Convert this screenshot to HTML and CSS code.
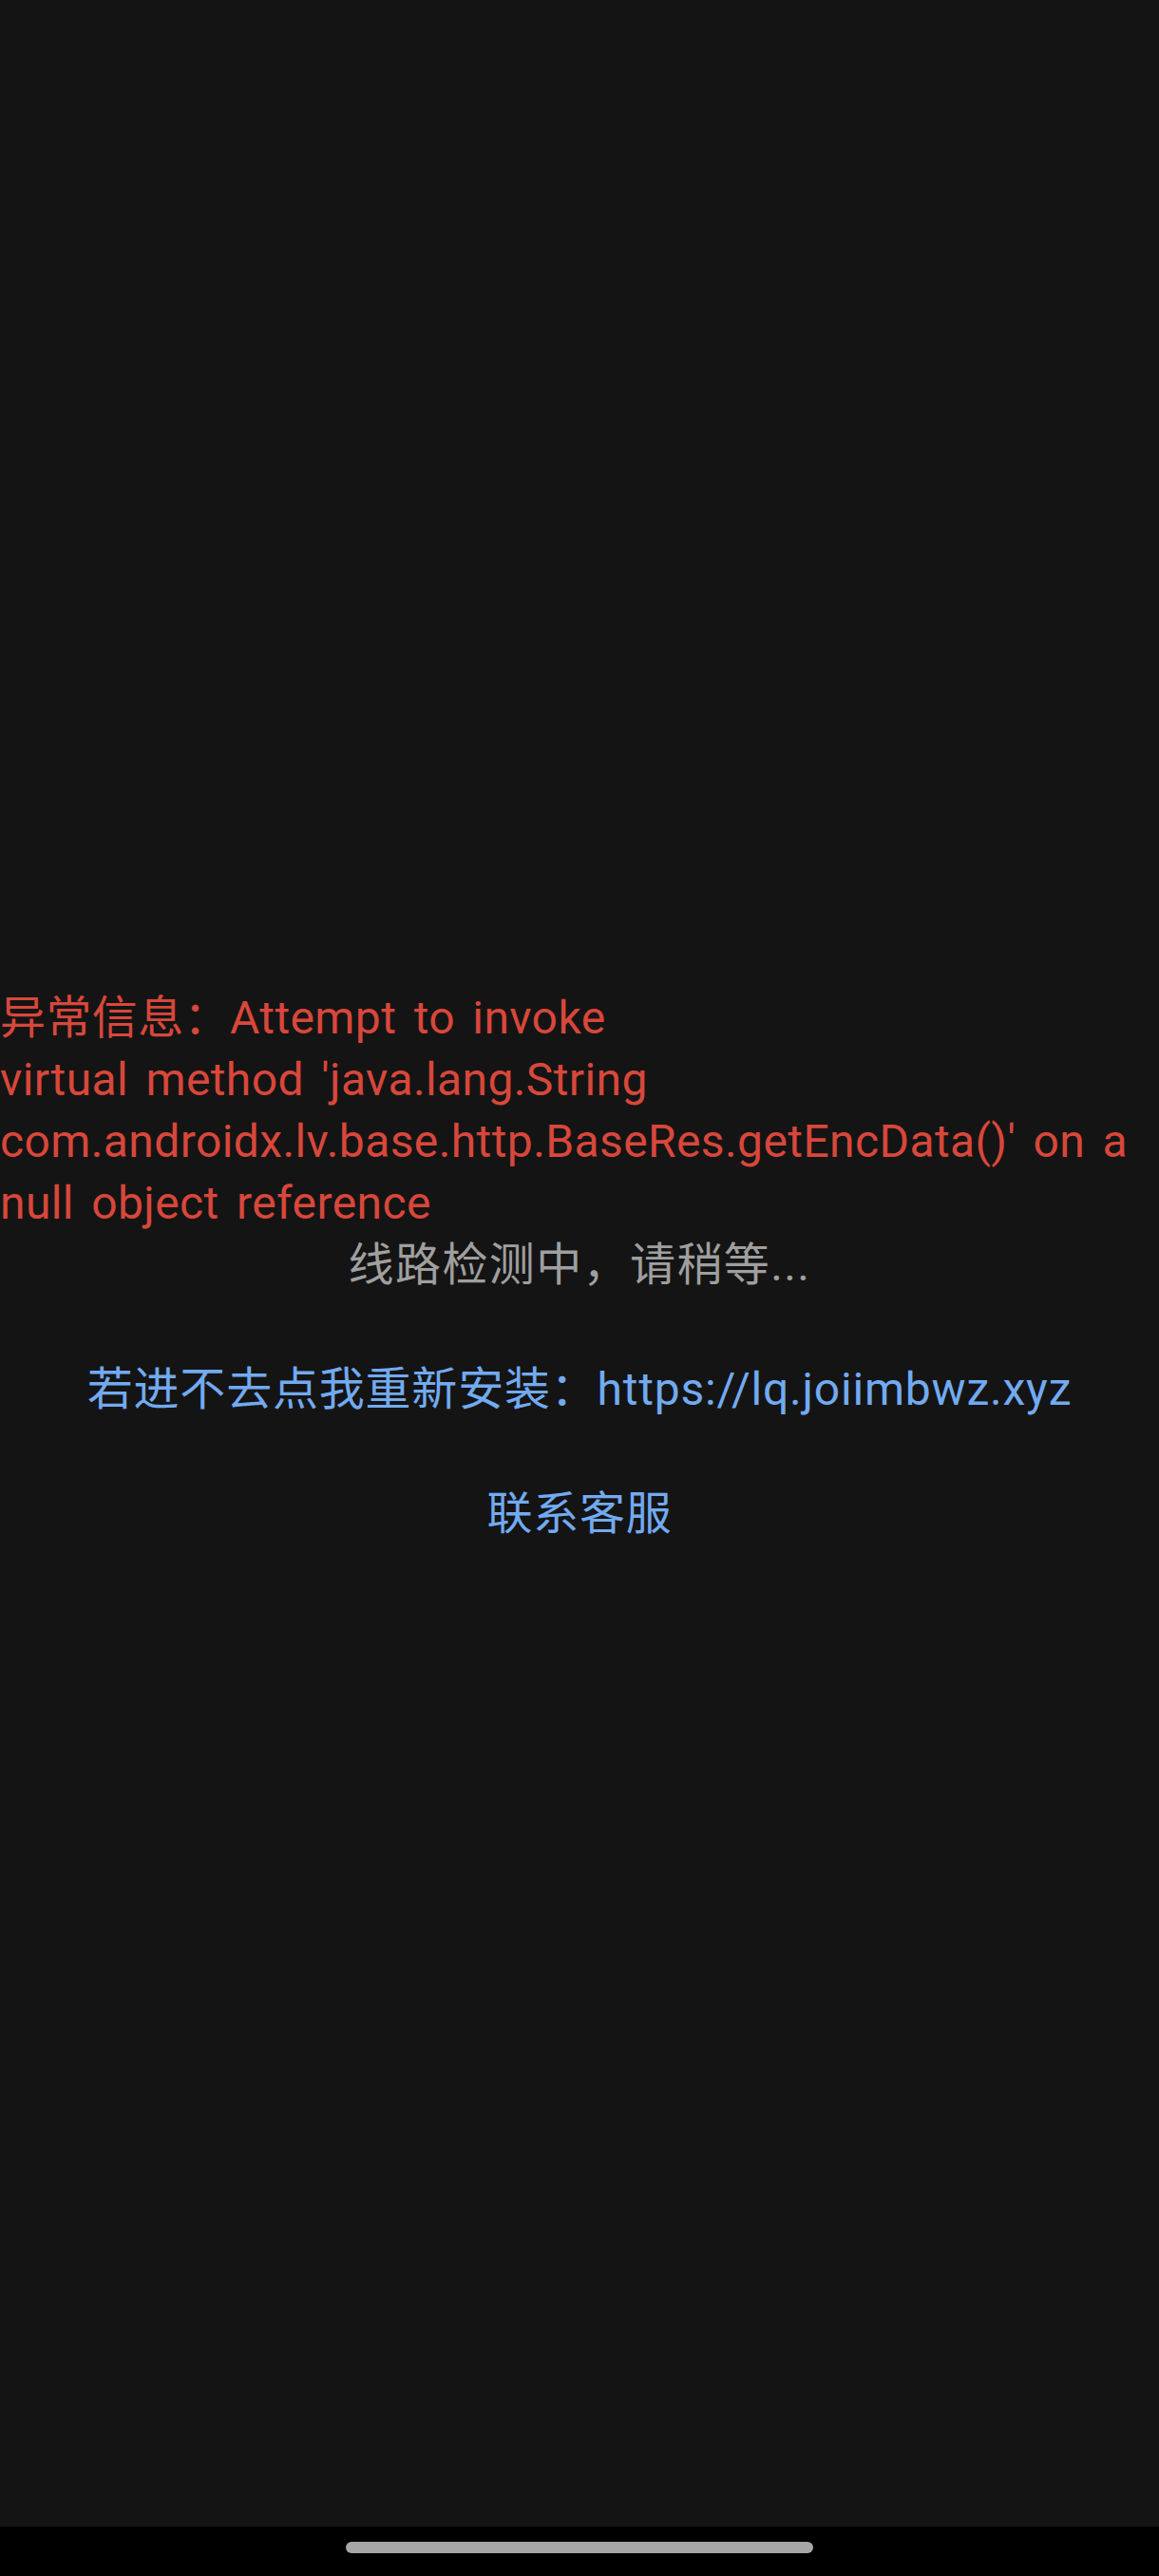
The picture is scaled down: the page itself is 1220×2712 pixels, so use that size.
FILE: index.html
```html
<!DOCTYPE html>
<html lang="zh-CN">
<head>
<meta charset="utf-8">
<link rel="stylesheet" href="styles.css">
</head>
<body>
<div class="screen">
  <div class="content">
    <p class="error">异常信息：Attempt to invoke<br>virtual method 'java.lang.String<br>com.androidx.lv.base.http.BaseRes.getEncData()' on a<br>null object reference</p>
    <p class="status">线路检测中，请稍等...</p>
    <p class="link">若进不去点我重新安装：https://lq.joiimbwz.xyz</p>
    <p class="link">联系客服</p>
  </div>
</div>
<div class="navbar"><div class="handle"></div></div>
</body>
</html>
```
FILE: styles.css
```css
html, body {
  margin: 0;
  padding: 0;
  background: #000;
}
body {
  font-family: Roboto, "Noto Sans CJK SC", sans-serif;
  font-size: 48px;
  line-height: 65px;
  letter-spacing: 0.8px;
}
.screen {
  height: 2660px;
  background: #141414;
  overflow: hidden;
}
.content {
  padding-top: 1039px;
  display: flex;
  flex-direction: column;
}
.content p {
  margin: 0;
}
.error {
  color: #d8473b;
  text-align: left;
  letter-spacing: 0.4px;
  word-spacing: 6px;
}
.status {
  color: #9f9f9f;
  text-align: center;
  letter-spacing: 1.4px;
}
.link {
  color: #72aaf0;
  text-align: center;
  margin-top: 66px !important;
}
.navbar {
  height: 52px;
  background: #000;
  display: flex;
  justify-content: center;
  padding-top: 16px;
  box-sizing: border-box;
}
.handle {
  width: 492px;
  height: 12px;
  border-radius: 6px;
  background: #a6a6a6;
}
```
